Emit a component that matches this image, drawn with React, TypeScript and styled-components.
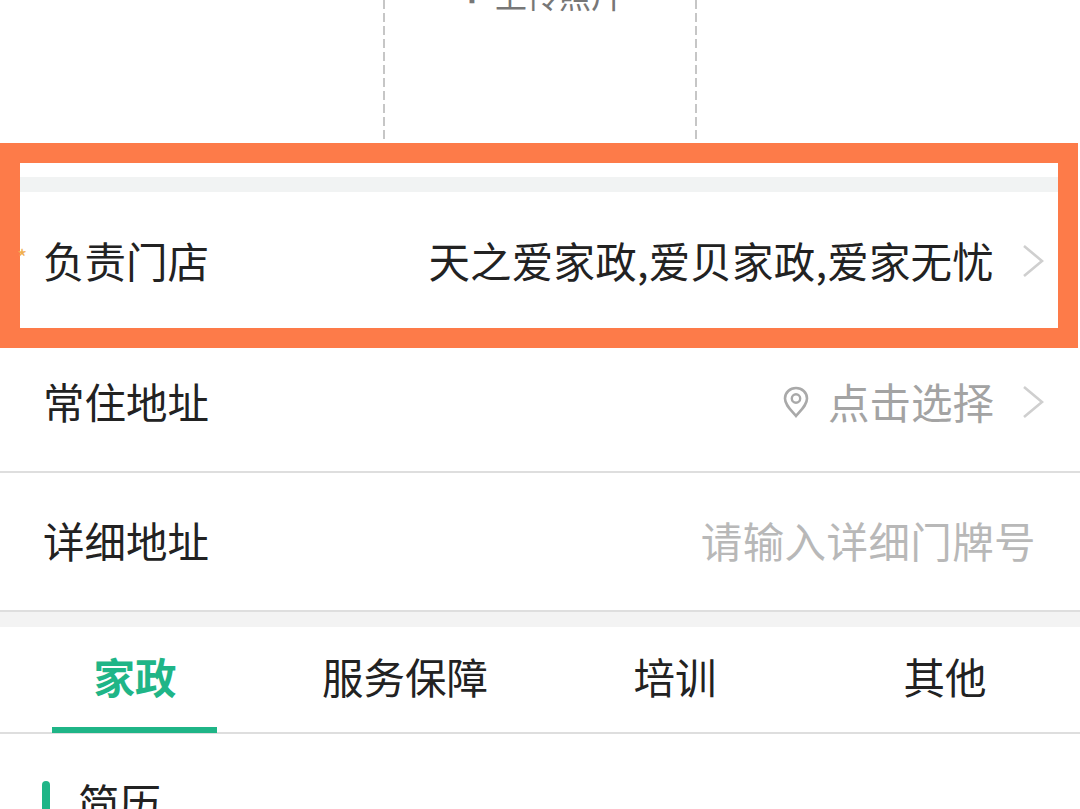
import styled, { createGlobalStyle } from "styled-components";

const FONT = '"Noto Sans CJK SC", "Liberation Sans", sans-serif';

const GlobalStyle = createGlobalStyle`
    html, body {
        margin: 0;
        background: #fff;
        overflow: hidden;
    }
`;

const tabs = ["家政", "服务保障", "培训", "其他"];

const Chevron = () => (
    <ChevronIcon viewBox="0 0 22 34">
        <path d="M2 2 L20 17 L2 32" fill="none" stroke="#cfcfcf" strokeWidth="2.6" />
    </ChevronIcon>
);

const Pin = () => (
    <PinIcon viewBox="0 0 26 32">
        <path
            d="M13 30 C8 24 2 19 2 12.500 C2 6.400 7 2 13 2 C19 2 24 6.400 24 12.500 C24 19 18 24 13 30 Z"
            fill="none"
            stroke="#a9a9a9"
            strokeWidth="2.600"
        />
        <circle cx="13" cy="12.500" r="4.200" fill="none" stroke="#a9a9a9" strokeWidth="2.400" />
    </PinIcon>
);

export default function App() {
    return (
        <Page>
            <GlobalStyle />
            <UploadSection>
                <UploadCard>
                    <UploadLabel>
                        <UploadPlus>+</UploadPlus>上传照片
                    </UploadLabel>
                </UploadCard>
            </UploadSection>
            <Highlight>
                <GrayBand />
                <StoreRow>
                    <Star>*</Star>
                    <RowLabel>负责门店</RowLabel>
                    <RowValue>天之爱家政,爱贝家政,爱家无忧</RowValue>
                    <Chevron />
                </StoreRow>
            </Highlight>
            <AddressRow>
                <RowLabel>常住地址</RowLabel>
                <Pin />
                <RowHint>点击选择</RowHint>
                <Chevron />
            </AddressRow>
            <DetailRow>
                <RowLabel>详细地址</RowLabel>
                <Placeholder>请输入详细门牌号</Placeholder>
            </DetailRow>
            <Divider />
            <TabBar>
                {tabs.map((tab, i) => (
                    <Tab key={tab} $active={i === 0}>
                        {tab}
                    </Tab>
                ))}
            </TabBar>
            <SectionTitle>
                <SectionBar />
                <SectionText>简历</SectionText>
            </SectionTitle>
        </Page>
    );
}

const Page = styled.div`
    width: 1080px;
    height: 809px;
    overflow: hidden;
    background: #fff;
    font-family: ${FONT};
    color: #222;
`;

const UploadSection = styled.div`
    height: 143px;
    display: flex;
    justify-content: center;
    overflow: hidden;
`;

const UploadCard = styled.div`
    width: 314px;
    height: 140px;
    display: flex;
    justify-content: center;
    background-image: repeating-linear-gradient(to bottom, #c6c6c6 0 9px, transparent 9px 13px),
        repeating-linear-gradient(to bottom, #c6c6c6 0 9px, transparent 9px 13px);
    background-size: 2px 100%;
    background-position: left top, right top;
    background-repeat: no-repeat;
`;

const UploadLabel = styled.div`
    margin-top: -35px;
    padding-left: 2px;
    font-size: 32px;
    line-height: 48px;
    color: #777;
    white-space: nowrap;
`;

const UploadPlus = styled.span`
    font-size: 44px;
    font-weight: 700;
    margin-right: 10px;
`;

const Highlight = styled.div`
    box-sizing: border-box;
    width: 1078px;
    height: 205px;
    border: 20px solid #fd7b49;
    padding-top: 14px;
    background: #fff;
`;

const GrayBand = styled.div`
    height: 15px;
    background: #f1f3f3;
`;

const Row = styled.div`
    box-sizing: border-box;
    display: flex;
    align-items: center;
`;

const StoreRow = styled(Row)`
    position: relative;
    height: 136px;
    padding: 0 14px 0 23px;
`;

const Star = styled.span`
    position: absolute;
    left: -3px;
    top: 50px;
    font-size: 22px;
    line-height: 28px;
    color: #f0b050;
`;

const AddressRow = styled(Row)`
    height: 125px;
    padding: 0 36px 18px 43px;
    border-bottom: 2px solid #dedede;
`;

const DetailRow = styled(Row)`
    height: 139px;
    padding: 0 44px 3px 43px;
    border-bottom: 2px solid #dedede;
`;

const RowLabel = styled.span`
    font-size: 41.5px;
    line-height: 56px;
    margin-right: auto;
    color: #222;
`;

const RowValue = styled.span`
    font-size: 41.5px;
    line-height: 56px;
    letter-spacing: 0.2px;
    color: #222;
    white-space: nowrap;
`;

const RowHint = styled.span`
    font-size: 41.5px;
    line-height: 56px;
    color: #a3a3a3;
`;

const Placeholder = styled.span`
    font-size: 41.5px;
    line-height: 56px;
    letter-spacing: 0.4px;
    color: #b8b8b8;
`;

const ChevronIcon = styled.svg`
    width: 22px;
    height: 34px;
    margin-left: 28px;
    margin-top: 2px;
    flex: none;
`;

const PinIcon = styled.svg`
    width: 26px;
    height: 32px;
    margin-right: 19px;
    margin-top: 2px;
    flex: none;
`;

const Divider = styled.div`
    height: 15px;
    background: #f3f3f3;
`;

const TabBar = styled.div`
    box-sizing: border-box;
    display: grid;
    grid-template-columns: repeat(4, 1fr);
    height: 107px;
    border-bottom: 2px solid #dedede;
`;

const Tab = styled.div<{ $active: boolean }>`
    position: relative;
    display: flex;
    justify-content: center;
    align-items: center;
    padding-bottom: 8px;
    font-size: 41.5px;
    font-weight: ${(p) => (p.$active ? 700 : 400)};
    color: ${(p) => (p.$active ? "#1fb587" : "#222")};

    &::after {
        content: "";
        display: ${(p) => (p.$active ? "block" : "none")};
        position: absolute;
        left: 52px;
        bottom: -1px;
        width: 165px;
        height: 6px;
        background: #1fb587;
    }
`;

const SectionTitle = styled.div`
    display: flex;
    gap: 28px;
    height: 60px;
    margin: 47px 0 0 42px;
`;

const SectionBar = styled.div`
    width: 8px;
    border-radius: 4px;
    background: #1fb587;
`;

const SectionText = styled.div`
    font-size: 41.5px;
    line-height: 42px;
    color: #222;
`;
